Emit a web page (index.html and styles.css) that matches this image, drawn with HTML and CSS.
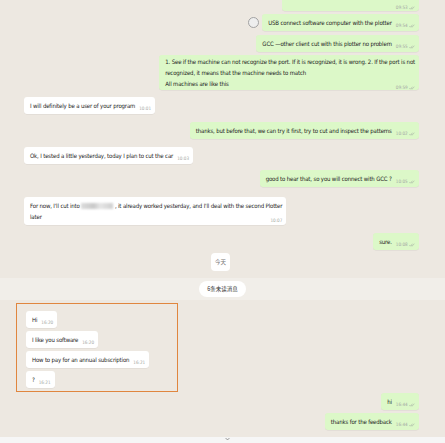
FILE: index.html
```html
<!DOCTYPE html>
<html lang="en">

<head>
    <meta name="viewport" content="width=device-width, initial-scale=1.0">
    <title>Chat</title>
    <link rel="stylesheet" href="styles.css">
</head>
<body>

    <div class="chat">

        <!-- Earlier messages -->
        <div class="msg out first">
            <div class="bubble cut"><span class="meta">09:53 <svg class="tick" viewBox="0 0 10 6"><path d="M0.5 3.2 L2.3 5 L6 0.8 M3.8 3.6 L5 5 L9 0.8" /></svg></span></div>
        </div>

        <div class="msg out gap-3">
            <span class="select"></span>
            <div class="bubble">USB connect software computer with the plotter<span class="meta">09:54 <svg class="tick" viewBox="0 0 10 6"><path d="M0.5 3.2 L2.3 5 L6 0.8 M3.8 3.6 L5 5 L9 0.8" /></svg></span></div>
        </div>

        <div class="msg out gap-4">
            <div class="bubble">GCC —other client cut with this plotter no problem<span class="meta">09:55 <svg class="tick" viewBox="0 0 10 6"><path d="M0.5 3.2 L2.3 5 L6 0.8 M3.8 3.6 L5 5 L9 0.8" /></svg></span></div>
        </div>

        <div class="msg out gap-3">
            <div class="bubble multi">1. See if the machine can not recognize the port. If it is recognized, it is wrong. 2. If the port is not<br>recognized, it means that the machine needs to match<br>All machines are like this<span class="meta low">09:59 <svg class="tick" viewBox="0 0 10 6"><path d="M0.5 3.2 L2.3 5 L6 0.8 M3.8 3.6 L5 5 L9 0.8" /></svg></span></div>
        </div>

        <div class="msg in gap-7">
            <div class="bubble">I will definitely be a user of your program<span class="meta">10:01</span></div>
        </div>

        <div class="msg out gap-8">
            <div class="bubble">thanks, but before that, we can try it first, try to cut and inspect the patterns<span class="meta">10:02 <svg class="tick" viewBox="0 0 10 6"><path d="M0.5 3.2 L2.3 5 L6 0.8 M3.8 3.6 L5 5 L9 0.8" /></svg></span></div>
        </div>

        <div class="msg in gap-8">
            <div class="bubble">Ok, I tested a little yesterday, today I plan to cut the car<span class="meta">10:03</span></div>
        </div>

        <div class="msg out gap-6">
            <div class="bubble">good to hear that, so you will connect with GCC ?<span class="meta">10:05 <svg class="tick" viewBox="0 0 10 6"><path d="M0.5 3.2 L2.3 5 L6 0.8 M3.8 3.6 L5 5 L9 0.8" /></svg></span></div>
        </div>

        <div class="msg in gap-10">
            <div class="bubble">For now, I'll cut into <span class="hidden-name"></span> , it already worked yesterday, and I'll deal with the second Plotter<br>later<span class="meta low">10:07</span></div>
        </div>

        <div class="msg out gap-8">
            <div class="bubble">sure.<span class="meta">10:08 <svg class="tick" viewBox="0 0 10 6"><path d="M0.5 3.2 L2.3 5 L6 0.8 M3.8 3.6 L5 5 L9 0.8" /></svg></span></div>
        </div>

        <!-- Day separator -->
        <div class="day">
            <span class="chip">今天</span>
        </div>

        <!-- Unread marker -->
        <div class="unread">
            <span class="chip">6条未读消息</span>
        </div>

        <!-- Highlighted messages -->
        <div class="highlight">
            <div class="msg in">
                <div class="bubble">Hi<span class="meta">16:20</span></div>
            </div>
            <div class="msg in gap-3">
                <div class="bubble">I like you software<span class="meta">16:20</span></div>
            </div>
            <div class="msg in gap-3">
                <div class="bubble">How to pay for an annual subscription<span class="meta">16:21</span></div>
            </div>
            <div class="msg in gap-3">
                <div class="bubble">?<span class="meta">16:21</span></div>
            </div>
        </div>

        <div class="msg out gap-1">
            <div class="bubble">hi<span class="meta">16:44 <svg class="tick" viewBox="0 0 10 6"><path d="M0.5 3.2 L2.3 5 L6 0.8 M3.8 3.6 L5 5 L9 0.8" /></svg></span></div>
        </div>

        <div class="msg out gap-3">
            <div class="bubble">thanks for the feedback<span class="meta">16:44 <svg class="tick" viewBox="0 0 10 6"><path d="M0.5 3.2 L2.3 5 L6 0.8 M3.8 3.6 L5 5 L9 0.8" /></svg></span></div>
        </div>

    </div>

    <!-- Bottom bar -->
    <div class="footer">
        <svg class="chevron" viewBox="0 0 8 5"><path d="M1 1 L4 4 L7 1" /></svg>
    </div>

</body>

</html>
```

FILE: styles.css
```css
/* General */
body {
    margin: 0;
    background-color: #ede8e1;
    font-family: 'Liberation Sans Narrow', 'DejaVu Sans Condensed', 'Liberation Sans', sans-serif;
    font-size: 6px;
    letter-spacing: -0.15px;
    color: #222;
    width: 445px;
    height: 443px;
    overflow: hidden;
    display: flex;
    flex-direction: column;
}

/* Message list */
.chat {
    flex: 1;
    display: flex;
    flex-direction: column;
    padding: 0 26px 0 24px;
}

.msg {
    display: flex;
    align-items: center;
}

.msg.out {
    justify-content: flex-end;
}

.msg.in {
    justify-content: flex-start;
}

.gap-1 { margin-top: 1px; }
.gap-3 { margin-top: 3px; }
.gap-4 { margin-top: 4px; }
.gap-6 { margin-top: 6px; }
.gap-7 { margin-top: 7px; }
.gap-8 { margin-top: 8px; }
.gap-10 { margin-top: 10px; }

/* Bubbles */
.bubble {
    background-color: #fff;
    border-radius: 3px;
    padding: 3px 4px 3px 6px;
    line-height: 11px;
    white-space: nowrap;
    box-shadow: 0 0.5px 0.5px rgba(0, 0, 0, 0.08);
}

.bubble.multi {
    padding-top: 1px;
    padding-bottom: 1px;
}

.out .bubble {
    background-color: #dcf8c8;
}

.bubble.cut {
    width: 127px;
    height: 11px;
    padding-top: 0;
    padding-bottom: 0;
    line-height: 9px;
    border-radius: 0 0 3px 3px;
}

/* Time stamps */
.meta {
    float: right;
    position: relative;
    top: 3px;
    margin-left: 4px;
    font-size: 4.6px;
    letter-spacing: 0;
    color: #a3a7a3;
}

.meta.low {
    top: 4px;
}

.tick {
    width: 6px;
    height: 4px;
    fill: none;
    stroke: #a0aaa0;
    stroke-width: 0.9;
    vertical-align: -0.5px;
}

/* Round select marker left of a message */
.select {
    width: 9px;
    height: 9px;
    border: 1.3px solid #a2a2a2;
    border-radius: 50%;
    background-color: #eeeeee;
    margin-right: 3px;
}

/* Blurred name */
.hidden-name {
    display: inline-block;
    width: 32px;
    height: 6px;
    vertical-align: -1px;
    background: linear-gradient(90deg, #dcdcdc, #c9c9c9 40%, #e6e6e6 60%, #cfcfcf);
    filter: blur(1px);
}

/* Day and unread chips */
.chip {
    background-color: #fff;
    border-radius: 4px;
    font-family: 'Noto Sans CJK SC', sans-serif;
    font-size: 5.5px;
    letter-spacing: 0;
    color: #555;
    line-height: 8px;
}

.day {
    display: flex;
    justify-content: center;
    margin-top: 3px;
    margin-left: -2px;
}

.day .chip {
    padding: 5px 4px;
    color: #777;
}

.unread {
    display: flex;
    justify-content: center;
    margin: 7px -26px 0 -24px;
    padding: 3px 0;
    background-color: #f1eee9;
}

.unread .chip {
    padding: 4px 8px;
    border-radius: 8px;
    color: #333;
}

/* Orange highlight box */
.highlight {
    margin: 3px 0 0 -8px;
    width: 151px;
    height: 73px;
    padding: 7px 0 7px 9px;
    border: 1.5px solid #e0863f;
}

/* Bottom bar */
.footer {
    height: 6px;
    background-color: #f6f6f6;
    display: flex;
    justify-content: center;
}

.chevron {
    width: 5px;
    height: 4px;
    fill: none;
    stroke: #777;
    stroke-width: 1.2;
    margin-left: 10px;
}
```
